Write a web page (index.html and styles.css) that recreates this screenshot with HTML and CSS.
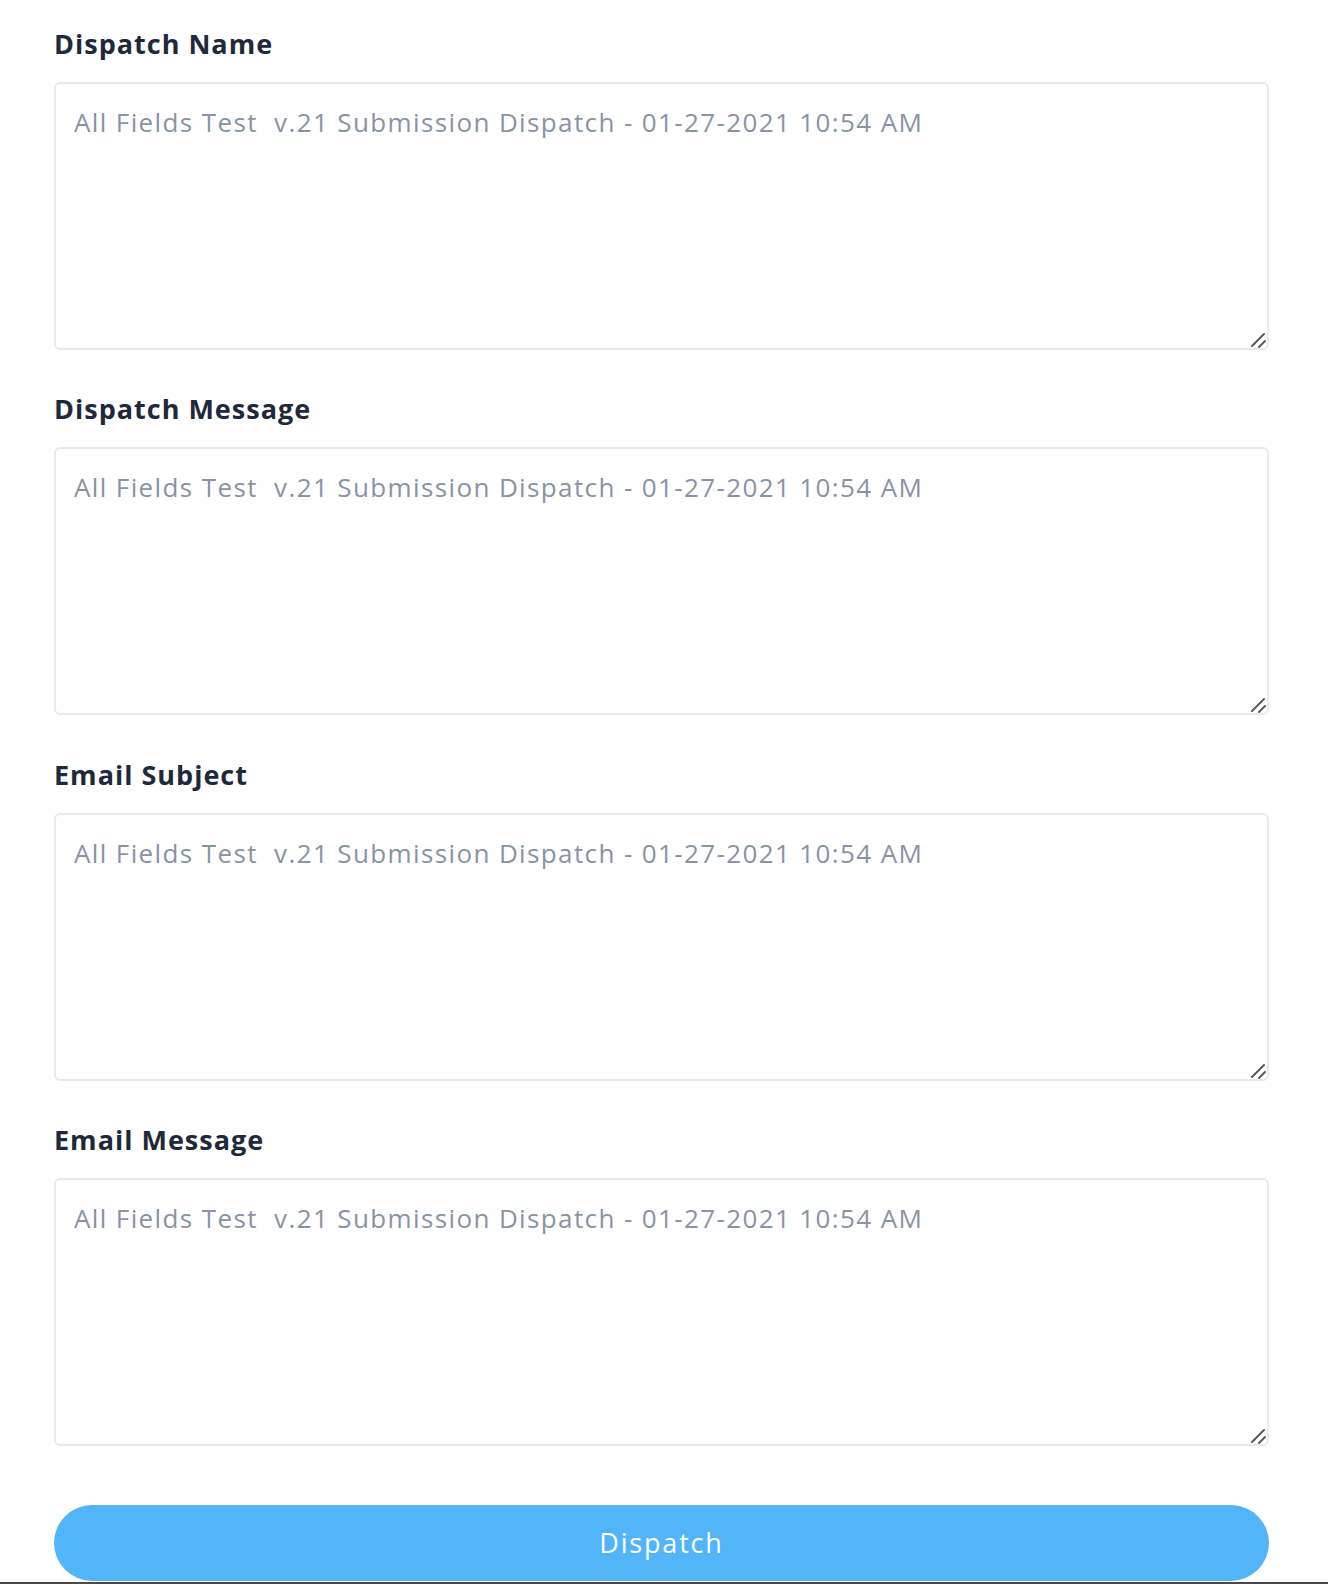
FILE: index.html
```html
<!DOCTYPE html>
<html lang="en">
<head>
<meta charset="utf-8">
<title>Dispatch</title>
<link rel="stylesheet" href="styles.css">
</head>
<body>
<form class="form">
  <div class="field">
    <label class="label" for="f1">Dispatch Name</label>
    <div class="box">
      <textarea id="f1" class="input">All Fields Test  v.21 Submission Dispatch - 01-27-2021 10:54 AM</textarea>
      <svg class="grip" width="16" height="16" viewBox="0 0 16 16"><path d="M2 14 L14 2 M9 15 L15 9" stroke="#5a5a5a" stroke-width="2" stroke-linecap="round" fill="none"/></svg>
    </div>
  </div>
  <div class="field">
    <label class="label" for="f2">Dispatch Message</label>
    <div class="box">
      <textarea id="f2" class="input">All Fields Test  v.21 Submission Dispatch - 01-27-2021 10:54 AM</textarea>
      <svg class="grip" width="16" height="16" viewBox="0 0 16 16"><path d="M2 14 L14 2 M9 15 L15 9" stroke="#5a5a5a" stroke-width="2" stroke-linecap="round" fill="none"/></svg>
    </div>
  </div>
  <div class="field">
    <label class="label" for="f3">Email Subject</label>
    <div class="box">
      <textarea id="f3" class="input">All Fields Test  v.21 Submission Dispatch - 01-27-2021 10:54 AM</textarea>
      <svg class="grip" width="16" height="16" viewBox="0 0 16 16"><path d="M2 14 L14 2 M9 15 L15 9" stroke="#5a5a5a" stroke-width="2" stroke-linecap="round" fill="none"/></svg>
    </div>
  </div>
  <div class="field">
    <label class="label" for="f4">Email Message</label>
    <div class="box">
      <textarea id="f4" class="input">All Fields Test  v.21 Submission Dispatch - 01-27-2021 10:54 AM</textarea>
      <svg class="grip" width="16" height="16" viewBox="0 0 16 16"><path d="M2 14 L14 2 M9 15 L15 9" stroke="#5a5a5a" stroke-width="2" stroke-linecap="round" fill="none"/></svg>
    </div>
  </div>
  <button type="button" class="btn">Dispatch</button>
</form>
<div class="edge"></div>
</body>
</html>
```
FILE: styles.css
```css
html, body {
  margin: 0;
  padding: 0;
  background: #ffffff;
  height: 1584px;
  overflow: hidden;
}
body {
  font-family: "Open Sans", "DejaVu Sans", sans-serif;
  position: relative;
}
.form {
  width: 1215px;
  margin-left: 54px;
  padding-top: 24px;
  display: flex;
  flex-direction: column;
}
.field {
  display: flex;
  flex-direction: column;
  margin-bottom: 39.3px;
}
.label {
  font-size: 27px;
  line-height: 40px;
  font-weight: 700;
  letter-spacing: 1px;
  color: #1e293b;
  margin-bottom: 18px;
}
.box {
  position: relative;
  width: 1215px;
  height: 268px;
}
.input {
  display: block;
  box-sizing: border-box;
  width: 1215px;
  height: 268px;
  border: 2px solid #e6e9f0;
  border-radius: 6px;
  padding: 18px 18px;
  font-family: "Open Sans", "DejaVu Sans", sans-serif;
  font-size: 26px;
  line-height: 40px;
  letter-spacing: 1.38px;
  color: #8893a6;
  background: #fff;
  resize: none;
  outline: none;
  white-space: pre-wrap;
  margin: 0;
}
.grip {
  position: absolute;
  right: 3px;
  bottom: 2px;
}
.btn {
  margin-top: 19.5px;
  height: 76px;
  width: 1215px;
  border: none;
  border-radius: 38px;
  background: #52b4f9;
  color: #ffffff;
  font-family: "Open Sans", "DejaVu Sans", sans-serif;
  font-size: 27px;
  font-weight: 400;
  letter-spacing: 1.8px;
  cursor: pointer;
}
.edge {
  position: absolute;
  left: 0;
  right: 0;
  top: 1582px;
  height: 2px;
  background: #4a4a4a;
}
```
